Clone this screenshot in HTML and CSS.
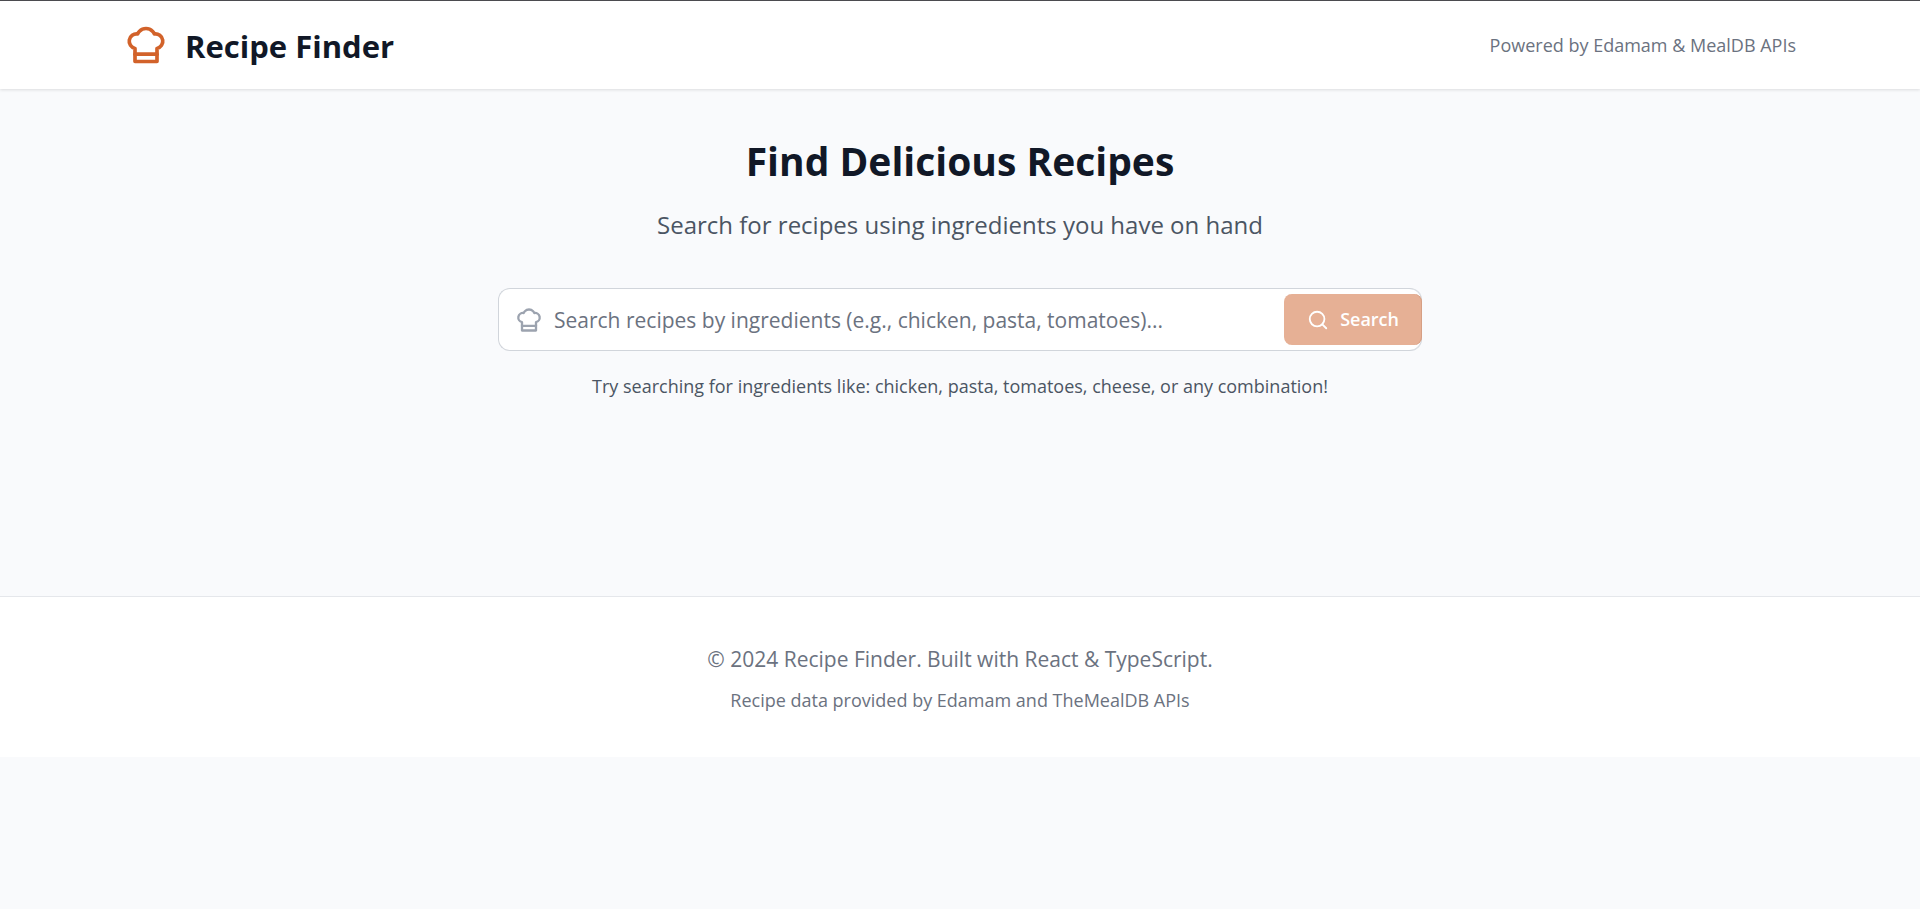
FILE: index.html
```html
<!DOCTYPE html>
<html lang="en">
<head>
<meta charset="utf-8">
<title>Recipe Finder</title>
<meta name="viewport" content="width=device-width, initial-scale=1">
<link rel="stylesheet" href="styles.css">
</head>
<body>
<header class="header">
  <div class="header-inner">
    <div class="brand">
      <svg class="icon brand-icon" viewBox="0 0 24 24" aria-hidden="true"><path d="M6 13.87A4 4 0 0 1 7.41 6a5.11 5.11 0 0 1 1.05-1.54 5 5 0 0 1 7.08 0A5.11 5.11 0 0 1 16.59 6 4 4 0 0 1 18 13.87V21H6Z"/><path d="M6 17h12"/></svg>
      <h1 class="brand-name">Recipe Finder</h1>
    </div>
    <p class="powered">Powered by Edamam &amp; MealDB APIs</p>
  </div>
</header>
<main class="main">
  <h2 class="hero-title">Find Delicious Recipes</h2>
  <p class="hero-subtitle">Search for recipes using ingredients you have on hand</p>
  <form class="search">
    <svg class="icon search-hat" viewBox="0 0 24 24" aria-hidden="true"><path d="M6 13.87A4 4 0 0 1 7.41 6a5.11 5.11 0 0 1 1.05-1.54 5 5 0 0 1 7.08 0A5.11 5.11 0 0 1 16.59 6 4 4 0 0 1 18 13.87V21H6Z"/><path d="M6 17h12"/></svg>
    <input class="search-input" type="text" aria-label="Ingredients" placeholder="Search recipes by ingredients (e.g., chicken, pasta, tomatoes)...">
    <button class="search-button" type="submit" disabled>
      <svg class="icon search-glass" viewBox="0 0 24 24" aria-hidden="true"><circle cx="11" cy="11" r="8"/><path d="m21 21-4.3-4.3"/></svg>
      <span>Search</span>
    </button>
  </form>
  <p class="hint">Try searching for ingredients like: chicken, pasta, tomatoes, cheese, or any combination!</p>
</main>
<footer class="footer">
  <p class="copyright">© 2024 Recipe Finder. Built with React &amp; TypeScript.</p>
  <p class="credits">Recipe data provided by Edamam and TheMealDB APIs</p>
</footer>
</body>
</html>
```
FILE: styles.css
```css
* {
  box-sizing: border-box;
}

body {
  margin: 0;
  border-top: 1px solid #4b4b4f;
  background: #f9fafc;
  color: #111827;
  font-family: "Segoe UI", "Open Sans", "Noto Sans", sans-serif;
}

h1,
h2,
p {
  margin: 0;
}

.icon {
  flex: none;
  fill: none;
  stroke: currentColor;
  stroke-width: 2;
  stroke-linecap: round;
  stroke-linejoin: round;
}

.header {
  background: #fff;
  box-shadow: 0 1px 3px rgba(0, 0, 0, 0.12);
}

.header-inner {
  display: flex;
  align-items: center;
  justify-content: space-between;
  max-width: 1720px;
  margin: 0 auto;
  padding: 22px 24px;
}

.brand {
  display: flex;
  align-items: center;
  gap: 17px;
}

.brand-icon {
  width: 44px;
  height: 44px;
  color: #d2622a;
}

.brand-name {
  padding-top: 2px;
  font-size: 31px;
  line-height: 42px;
  font-weight: 700;
}

.powered {
  color: #6b7280;
  font-size: 18px;
  line-height: 26px;
}

.main {
  display: flex;
  flex-direction: column;
  align-items: center;
  max-width: 972px;
  margin: 0 auto;
  padding: 46px 24px 197px;
  text-align: center;
}

.hero-title {
  font-size: 39px;
  line-height: 52px;
  font-weight: 700;
}

.hero-subtitle {
  margin-top: 20px;
  color: #4b5563;
  font-size: 24px;
  line-height: 36px;
}

.search {
  display: flex;
  align-items: center;
  width: 100%;
  margin-top: 45px;
  padding: 5px 0 5px 16px;
  border: 1px solid #d1d5db;
  border-right-width: 0;
  border-radius: 12px;
  background: #fff;
  box-shadow: inset -1px 0 #d1d5db;
}

.search-hat {
  width: 28px;
  height: 28px;
  color: #9ca3af;
}

.search-input {
  flex: 1;
  min-width: 0;
  padding: 0 11px;
  border: 0;
  outline: 0;
  background: transparent;
  color: #111827;
  font: inherit;
  font-size: 21px;
  line-height: 32px;
}

.search-input::placeholder {
  color: #6b7280;
  opacity: 1;
}

.search-button {
  display: flex;
  align-items: center;
  gap: 11px;
  padding: 12px 23px;
  border: 0;
  border-radius: 8px;
  background: #e6b095;
  box-shadow: inset -1px 0 #d69f84;
  color: #fff;
  font: inherit;
  font-size: 18px;
  line-height: 27px;
  font-weight: 600;
}

.search-glass {
  width: 22px;
  height: 22px;
}

.hint {
  margin-top: 22px;
  color: #4b5563;
  font-size: 18px;
  line-height: 26px;
}

.footer {
  padding: 44px 24px;
  border-top: 1px solid #e5e7eb;
  background: #fff;
  color: #6b7280;
  text-align: center;
}

.copyright {
  font-size: 21px;
  line-height: 36px;
}

.credits {
  margin-top: 10px;
  font-size: 18px;
  line-height: 26px;
}
```
